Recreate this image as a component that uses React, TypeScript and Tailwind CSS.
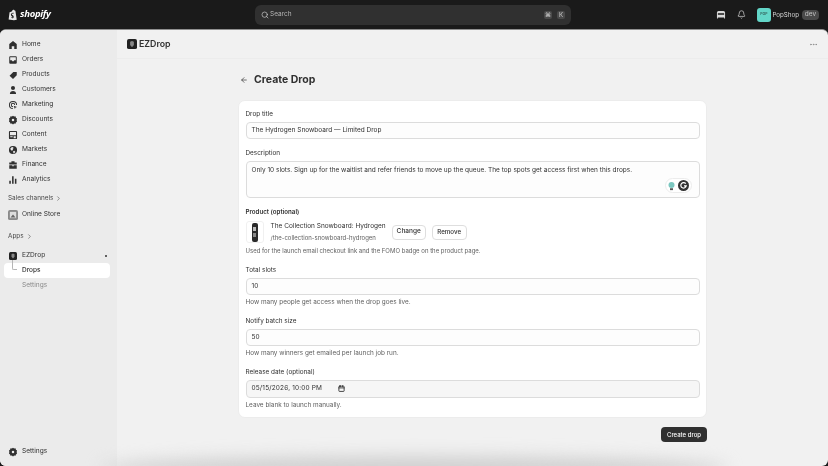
import React from "react";
import { ArrowLeft, Search, Bell, MoreHorizontal, ChevronRight, Calendar } from "lucide-react";

const I = ({ children }: { children: React.ReactNode }) => (
  <svg viewBox="0 0 16 16" className="w-[10px] h-[10px] shrink-0" fill="#303030">{children}</svg>
);

const gear = <path fillRule="evenodd" d="M8 1l1.800 1.300 2.200-.2.700 2.100 1.800 1.300-.7 2.500.7 2.500-1.800 1.300-.7 2.100-2.200-.2L8 15l-1.800-1.300-2.200.2-.7-2.100-1.800-1.300.7-2.500-.7-2.500 1.800-1.300.7-2.100 2.200.2ZM8 6a2 2 0 1 0 0 4 2 2 0 0 0 0-4Z" />;

const icons: Record<string, React.ReactNode> = {
  Home: <path d="M8 1.500 14 6.500V14.500H10V10H6V14.500H2V6.500Z" />,
  Orders: <path fillRule="evenodd" d="M3.500 2h9A1.500 1.500 0 0 1 14 3.500v9a1.500 1.500 0 0 1-1.500 1.500h-9A1.500 1.500 0 0 1 2 12.500v-9A1.500 1.500 0 0 1 3.500 2ZM3.500 3.500v5h2.500l1 1.500h2l1-1.500h2.500v-5Z" />,
  Products: <path d="M8.500 3H13a1 1 0 0 1 1 1v4.500L8 14.500 2.500 9Z" />,
  Customers: <path d="M8 1.500a3 3 0 1 1 0 6.500 3 3 0 0 1 0-6.500ZM3 14.500c0-3 2-5 5-5s5 2 5 5Z" />,
  Marketing: <path fillRule="evenodd" d="M8 1.500a6.500 6.500 0 0 1 6.500 6.500h-1.500A5 5 0 1 0 8 13v1.500A6.500 6.500 0 0 1 8 1.500ZM8 4.500a3.500 3.500 0 0 1 3.500 3.500H10a2 2 0 1 0-2 2v1.500a3.500 3.500 0 0 1 0-7ZM9 9l5.500 2-2.500 1-1 2.500Z" />,
  Discounts: gear,
  Content: <path fillRule="evenodd" d="M3 1.500h10A1.500 1.500 0 0 1 14.500 3v10a1.500 1.500 0 0 1-1.500 1.500H3A1.500 1.500 0 0 1 1.500 13V3A1.500 1.500 0 0 1 3 1.500ZM3.200 3.200v5h9.600v-5ZM3.500 10v1.500h4V10ZM9 10v3h3.500v-3Z" />,
  Markets: <path fillRule="evenodd" d="M8 1.500a6.500 6.500 0 1 1 0 13 6.500 6.500 0 0 1 0-13ZM5 4 3.500 6.500 6 9l2-1-.5-2 1.500-1-1-2ZM10 9l-2 1.500 1 3 3-2.500Z" />,
  Finance: <path d="M5.500 2h5v2H14v3H2V4h3.500ZM2 8.200h5V10h2V8.200h5V14H2Z" />,
  Analytics: <path d="M2 9h2.500v5H2ZM6.500 2h2.500v12H6.500ZM11 6h2.500v8H11Z" />,
  Settings: gear,
};

const nav = ["Home", "Orders", "Products", "Customers", "Marketing", "Discounts", "Content", "Markets", "Finance", "Analytics"];

const NavRow = ({ name }: { name: string }) => (
  <div className="h-[15px] flex items-center pl-[8px] gap-[4px] text-[6.600px] font-normal text-[#303030]">
    <I>{icons[name]}</I>
    <span>{name}</span>
  </div>
);

const EZ = ({ size }: { size: string }) => (
  <svg viewBox="0 0 16 16" className={size}>
    <rect width="16" height="16" rx="3" fill="#222" />
    <path d="M8 3l3 1.500v5L8 13 5 9.500v-5Z" fill="#888" />
  </svg>
);

const Label = ({ children }: { children: React.ReactNode }) => (
  <div className="text-[6.400px] leading-[10px] font-normal text-[#303030] mb-[3px]">{children}</div>
);
const Help = ({ children }: { children: React.ReactNode }) => (
  <div className="text-[6.400px] leading-[10px] text-[#616161] mt-[2px]">{children}</div>
);
const Field = ({ children, h = "h-[17px]", bg = "bg-[#fdfdfd]" }: { children?: React.ReactNode; h?: string; bg?: string }) => (
  <div className={`${h} ${bg} rounded-[4px] border border-[#dcdcdc] px-[5px] text-[6.500px] text-[#303030] flex items-center`}>
    {children}
  </div>
);

export default function App() {
  return (
    <div className="w-[828px] h-[466px] bg-[#1a1a1a] flex flex-col overflow-hidden font-['Inter',sans-serif] opacity-[0.999]">
      <header className="h-[29px] shrink-0 flex items-center relative">
        <div className="w-[254px] pl-[8px] flex items-center gap-[2px] shrink-0">
          <svg viewBox="0 0 16 18" className="w-[10px] h-[12px]">
            <path d="M2.500 4.500 6 3.500C6.500 1.500 8 .5 9 .5c1 0 1.500.7 1.800 1.500l1 .2L14 16.500 9.500 17.500 1 16Z" fill="#e8e8e8" />
            <path d="M9.300 6.800s-.8-.4-1.600-.3c-1.700.1-1.700 1.200-1.700 1.400.1 1.300 3 1.500 3.100 3.700 0 1.700-1.100 2.600-2.300 2.600-1.200 0-2-.7-2-.7l.3-1.100s.9.7 1.500.6c.4 0 .6-.3.6-.6-.1-1.400-2.500-1.300-2.600-3.700 0-1.900 1.300-3.300 3.300-3.400.7 0 1 .2 1 .2Z" fill="#1a1a1a" />
          </svg>
          <span className="text-white text-[9.500px] font-bold italic font-['Open_Sans',sans-serif] tracking-[-0.3px]">shopify</span>
        </div>
        <div className="w-[316px] h-[20px] ml-[1px] rounded-[6px] bg-[#303030] flex items-center pl-[6px] pr-[6px] text-[#b5b5b5] text-[6.500px]">
          <Search size={8} strokeWidth={2} className="text-[#d0d0d0]" />
          <span className="ml-[1px]">Search</span>
          <span className="ml-auto flex gap-[5px] text-[6px] text-[#cfcfcf]">
            <span className="w-[8px] h-[8px] rounded-[2px] bg-[#4a4a4a] flex items-center justify-center">⌘</span>
            <span className="w-[8px] h-[8px] rounded-[2px] bg-[#4a4a4a] flex items-center justify-center">K</span>
          </span>
        </div>
        <div className="ml-auto flex items-center pr-[9px]">
          <svg viewBox="0 0 16 16" className="w-[10px] h-[10px] mr-[11.500px]" fill="#d8d8d8">
            <path fillRule="evenodd" d="M4 1.500h8A2.500 2.500 0 0 1 14.500 4v8a2.500 2.500 0 0 1-1.500 2.300V12H3v2.300A2.500 2.500 0 0 1 1.500 12V4A2.500 2.500 0 0 1 4 1.500ZM3 5v2.500h10V5Z" />
          </svg>
          <Bell size={9} strokeWidth={1.800} className="text-[#dcdcdc] mr-[10.500px]" />
          <div className="w-[14px] h-[14px] rounded-[3px] bg-[#63d6c8] flex items-center justify-center text-[3.500px] font-bold text-[#3a6f69] mr-[1.500px]">POP</div>
          <span className="text-[6.200px] text-[#d6d6d6]">PopShop</span>
          <span className="ml-[3px] w-[17px] h-[10px] rounded-[4px] bg-[#4a4a4a] text-[6.500px] text-[#c4c4c4] flex items-center justify-center">dev</span>
        </div>
      </header>

      <div className="flex-1 flex rounded-[6px] bg-[#f1f1f1] overflow-hidden relative border-t border-[#8f8f8f]">
        <aside className="w-[117px] shrink-0 bg-[#ebebeb] flex flex-col pt-[7px]">
          {nav.map((n) => (
            <NavRow key={n} name={n} />
          ))}
          <div className="mt-[4px] h-[15px] pl-[8px] flex items-center gap-[2px] text-[6.400px] text-[#4a4a4a]">
            Sales channels <ChevronRight size={7} />
          </div>
          <div className="mt-[1px] h-[15px] flex items-center pl-[8px] text-[6.600px] text-[#303030]">
            <svg viewBox="0 0 16 16" className="w-[10px] h-[10px] mr-[4px] shrink-0">
              <rect width="16" height="16" rx="3" fill="#8a8a8a" />
              <rect x="3" y="3" width="10" height="10" fill="#ddd" />
              <path d="M4 12 8 7l4 5Z" fill="#666" />
            </svg>
            Online Store
          </div>
          <div className="mt-[7px] h-[15px] pl-[8px] flex items-center gap-[2px] text-[6.400px] text-[#4a4a4a]">
            Apps <ChevronRight size={7} />
          </div>
          <div className="mt-[4px] h-[15px] flex items-center pl-[9px] pr-[10px] text-[6.600px] text-[#303030]">
            <EZ size="w-[8px] h-[10px] mr-[5px]" />
            EZDrop
            <span className="ml-auto w-[2px] h-[2px] rounded-full bg-[#303030]" />
          </div>
          <div className="relative ml-[4px] mr-[7px] h-[15px] rounded-[4px] bg-white flex items-center pl-[18px] text-[6.500px] font-medium text-[#303030]">
            <span className="absolute left-[8px] top-[-3px] w-[5px] h-[10px] border-l border-b border-[#b5b5b5] rounded-bl-[2px]" />
            Drops
          </div>
          <div className="h-[15px] flex items-center pl-[22px] text-[6.600px] text-[#8a8a8a]">Settings</div>
          <div className="mt-auto mb-[7px]">
            <NavRow name="Settings" />
          </div>
        </aside>

        <main className="flex-1 flex flex-col min-w-0">
          <div className="h-[29px] shrink-0 flex items-center px-[10px] border-b border-[#ececec]">
            <EZ size="w-[10px] h-[10px] mr-[2px]" />
            <span className="text-[8.800px] font-semibold text-[#303030]">EZDrop</span>
            <MoreHorizontal size={9} className="ml-auto text-[#8a8a8a]" />
          </div>
          <div className="w-[469px] ml-[121px] flex flex-col">
            <div className="h-[41px] flex items-center">
              <ArrowLeft size={8} className="text-[#303030] ml-[2px]" strokeWidth={2} />
              <span className="ml-[6px] text-[10.500px] font-bold text-[#303030]">Create Drop</span>
            </div>
            <div className="h-[318px] bg-white rounded-[7px] border border-[#ececec] px-[6.500px] pt-[8px] flex flex-col">
              <Label>Drop title</Label>
              <Field>The Hydrogen Snowboard — Limited Drop</Field>
              <div className="mt-[9px]"><Label>Description</Label></div>
              <div className="relative h-[37px] rounded-[4px] border border-[#dcdcdc] bg-[#fdfdfd] px-[5px] pt-[3px] text-[6.500px] leading-[10px] text-[#303030] whitespace-nowrap">
                Only 10 slots. Sign up for the waitlist and refer friends to move up the queue. The top spots get access first when this drops.
                <div className="absolute right-[7px] bottom-[4px] w-[27px] h-[15px] rounded-[8px] bg-white border border-[#ececec] flex items-center justify-center gap-[2px]">
                  <svg viewBox="0 0 12 12" className="w-[9px] h-[10px]">
                    <circle cx="6" cy="4.500" r="4" fill="#7cc7c0" />
                    <rect x="4" y="9" width="4" height="2.500" fill="#555" />
                  </svg>
                  <svg viewBox="0 0 12 12" className="w-[11px] h-[11px]">
                    <circle cx="6" cy="6" r="6" fill="#333" />
                    <path d="M8.500 4A3 3 0 1 0 9 6.500H6.500" fill="none" stroke="#fff" strokeWidth="1.300" />
                  </svg>
                </div>
              </div>
              <div className="mt-[9px] text-[6.200px] leading-[10px] font-semibold text-[#303030]">Product (optional)</div>
              <div className="mt-[4px] flex items-center h-[22px]">
                <div className="w-[18px] h-[22px] rounded-[3px] border border-[#f0f0f0] flex items-center justify-center shrink-0">
                  <div className="w-[6px] h-[19px] bg-[#2a2a2a] rounded-[2px] flex flex-col items-center justify-center gap-[2px]">
                    <span className="w-[3px] h-[4px] bg-[#bbb]" />
                    <span className="w-[3px] h-[4px] bg-[#888]" />
                  </div>
                </div>
                <div className="ml-[7px] flex flex-col">
                  <span className="text-[6.500px] leading-[11px] text-[#303030] whitespace-nowrap">The Collection Snowboard: Hydrogen</span>
                  <span className="text-[6px] leading-[11px] text-[#616161] whitespace-nowrap">/the-collection-snowboard-hydrogen</span>
                </div>
                <button className="ml-[6px] w-[34px] h-[15px] rounded-[4px] bg-white border border-[#dedede] text-[6.500px] font-medium text-[#303030]">Change</button>
                <button className="ml-[6px] w-[35px] h-[15px] rounded-[4px] bg-white border border-[#dedede] text-[6.200px] font-medium text-[#303030]">Remove</button>
              </div>
              <div className="mt-[3px] text-[6px] leading-[10px] text-[#616161]">Used for the launch email checkout link and the FOMO badge on the product page.</div>
              <div className="mt-[9px]"><Label>Total slots</Label></div>
              <Field>10</Field>
              <Help>How many people get access when the drop goes live.</Help>
              <div className="mt-[9px]"><Label>Notify batch size</Label></div>
              <Field>50</Field>
              <Help>How many winners get emailed per launch job run.</Help>
              <div className="mt-[9px]"><Label>Release date (optional)</Label></div>
              <Field h="h-[18px]" bg="bg-[#f6f6f6]">
                <span className="tracking-[0.15px]">05/15/2026, 10:00 PM</span>
                <Calendar size={7} className="ml-[16px] mt-[-1px]" strokeWidth={3} />
              </Field>
              <Help>Leave blank to launch manually.</Help>
            </div>
            <div className="mt-[9px] flex justify-end">
              <button className="w-[46px] h-[15px] rounded-[4px] bg-[#303030] text-white text-[6px] font-medium">Create drop</button>
            </div>
          </div>
          <div className="absolute left-[100px] right-[100px] bottom-[-14px] h-[24px] rounded-[50%] bg-[#d0d0d0] blur-[8px]" />
        </main>
      </div>
    </div>
  );
}
